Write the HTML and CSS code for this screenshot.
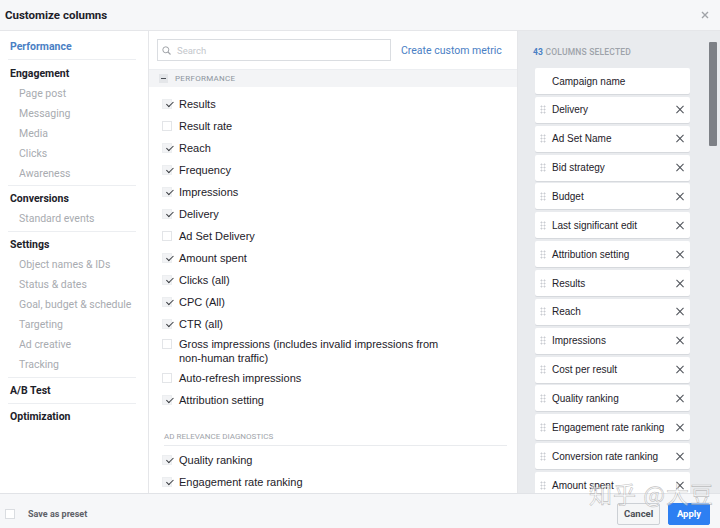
FILE: index.html
```html
<!DOCTYPE html>
<html>
<head>
<meta charset="utf-8">
<link rel="stylesheet" href="styles.css">
</head>
<body>
<div class="dialog">
  <div class="header">
    <span class="title">Customize columns</span>
    <svg class="close" width="8" height="8" viewBox="0 0 8 8"><path d="M1 1L7 7M7 1L1 7" stroke="#a0a3a8" stroke-width="1.4"/></svg>
  </div>
  <div class="body">
    <div class="sidebar">
      <div class="sec first"><div class="head active">Performance</div></div>
      <div class="sec eng"><div class="head">Engagement</div>
        <div class="sub">Page post</div><div class="sub">Messaging</div><div class="sub">Media</div><div class="sub">Clicks</div><div class="sub">Awareness</div></div>
      <div class="sec"><div class="head">Conversions</div><div class="sub">Standard events</div></div>
      <div class="sec"><div class="head">Settings</div>
        <div class="sub">Object names &amp; IDs</div><div class="sub">Status &amp; dates</div><div class="sub">Goal, budget &amp; schedule</div><div class="sub">Targeting</div><div class="sub">Ad creative</div><div class="sub">Tracking</div></div>
      <div class="sec"><div class="head">A/B Test</div></div>
      <div class="sec last"><div class="head">Optimization</div></div>
    </div>
    <div class="main">
      <div class="toolbar">
        <div class="search">
          <svg width="9" height="9" viewBox="0 0 9 9"><circle cx="3.8" cy="3.8" r="3" fill="none" stroke="#a0a3a8" stroke-width="1"/><path d="M6 6L8.5 8.5" stroke="#a0a3a8" stroke-width="1.1"/></svg>
          <span class="ph">Search</span>
        </div>
        <span class="link">Create custom metric</span>
      </div>
      <div class="group-head"><span class="minus"></span><span>PERFORMANCE</span></div>
      <div class="list">
        <div class="row"><span class="cb on"></span><span>Results</span></div>
        <div class="row"><span class="cb"></span><span>Result rate</span></div>
        <div class="row"><span class="cb on"></span><span>Reach</span></div>
        <div class="row"><span class="cb on"></span><span>Frequency</span></div>
        <div class="row"><span class="cb on"></span><span>Impressions</span></div>
        <div class="row"><span class="cb on"></span><span>Delivery</span></div>
        <div class="row"><span class="cb"></span><span>Ad Set Delivery</span></div>
        <div class="row"><span class="cb on"></span><span>Amount spent</span></div>
        <div class="row"><span class="cb on"></span><span>Clicks (all)</span></div>
        <div class="row"><span class="cb on"></span><span>CPC (All)</span></div>
        <div class="row"><span class="cb on"></span><span>CTR (all)</span></div>
        <div class="row multi"><span class="cb"></span><span class="wrap">Gross impressions (includes invalid impressions from non-human traffic)</span></div>
        <div class="row"><span class="cb"></span><span>Auto-refresh impressions</span></div>
        <div class="row"><span class="cb on"></span><span>Attribution setting</span></div>
        <div class="subhead">AD RELEVANCE DIAGNOSTICS</div>
        <div class="row"><span class="cb on"></span><span>Quality ranking</span></div>
        <div class="row"><span class="cb on"></span><span>Engagement rate ranking</span></div>
      </div>
    </div>
    <div class="selected">
      <div class="count"><span class="num">43</span> COLUMNS SELECTED</div>
      <div class="cards">
        <div class="card fixed"><span class="name">Campaign name</span></div>
        <div class="card"><span class="drag"></span><span class="name">Delivery</span><span class="x"></span></div>
        <div class="card"><span class="drag"></span><span class="name">Ad Set Name</span><span class="x"></span></div>
        <div class="card"><span class="drag"></span><span class="name">Bid strategy</span><span class="x"></span></div>
        <div class="card"><span class="drag"></span><span class="name">Budget</span><span class="x"></span></div>
        <div class="card"><span class="drag"></span><span class="name">Last significant edit</span><span class="x"></span></div>
        <div class="card"><span class="drag"></span><span class="name">Attribution setting</span><span class="x"></span></div>
        <div class="card"><span class="drag"></span><span class="name">Results</span><span class="x"></span></div>
        <div class="card"><span class="drag"></span><span class="name">Reach</span><span class="x"></span></div>
        <div class="card"><span class="drag"></span><span class="name">Impressions</span><span class="x"></span></div>
        <div class="card"><span class="drag"></span><span class="name">Cost per result</span><span class="x"></span></div>
        <div class="card"><span class="drag"></span><span class="name">Quality ranking</span><span class="x"></span></div>
        <div class="card"><span class="drag"></span><span class="name">Engagement rate ranking</span><span class="x"></span></div>
        <div class="card"><span class="drag"></span><span class="name">Conversion rate ranking</span><span class="x"></span></div>
        <div class="card"><span class="drag"></span><span class="name">Amount spent</span><span class="x"></span></div>
      </div>
      <div class="scrollbar"></div>
    </div>
  </div>
  <div class="footer">
    <span class="cb plain"></span>
    <span class="preset">Save as preset</span>
    <span class="spacer"></span>
    <span class="btn cancel">Cancel</span>
    <span class="btn apply">Apply</span>
  </div>
  <div class="watermark">知乎 @大豆</div>
</div>
</body>
</html>
```

FILE: styles.css
```css
* { box-sizing: border-box; }
html, body { margin: 0; padding: 0; }
body {
  width: 720px;
  height: 528px;
  overflow: hidden;
  background: #ffffff;
  font-family: Roboto, "Liberation Sans", Arial, sans-serif;
  color: #1d2129;
}
.dialog {
  position: relative;
  width: 720px;
  height: 528px;
  display: flex;
  flex-direction: column;
}
.header {
  height: 31px;
  flex: none;
  display: flex;
  align-items: center;
  justify-content: space-between;
  padding: 0 11px 0 5px;
  background: #f6f7f9;
  border-bottom: 1px solid #e5e6e9;
}
.title {
  font-size: 11.5px;
  font-weight: 700;
  color: #1d2129;
}
.close { display: block; }
.body {
  flex: none;
  height: 462px;
  display: flex;
  overflow: hidden;
}
/* sidebar */
.sidebar {
  width: 149px;
  flex: none;
  padding: 0 12px 0 8px;
  border-right: 1px solid #e5e6e9;
}
.sec {
  padding: 3px 0 2px;
  border-bottom: 1px solid #eceef1;
}
.sec.first { padding-top: 6px; }
.sec.eng { padding: 4px 0 1px; }
.sec.last { border-bottom: none; }
.head {
  height: 20px;
  line-height: 20px;
  padding-left: 2px;
  font-size: 10.5px;
  font-weight: 700;
  color: #1d2129;
}
.head.active { color: #4a80c4; }
.sub {
  height: 20px;
  line-height: 20px;
  padding-left: 11px;
  font-size: 10.5px;
  color: #a8abb0;
}
/* main */
.main {
  width: 369px;
  flex: none;
  border-right: 1px solid #e5e6e9;
  overflow: hidden;
}
.toolbar {
  height: 39px;
  display: flex;
  align-items: center;
  padding: 0 0 0 8px;
  border-bottom: 1px solid #eceef1;
}
.search {
  width: 234px;
  height: 22px;
  border: 1px solid #dadde1;
  display: flex;
  align-items: center;
  gap: 6px;
  padding-left: 4px;
}
.search svg { display: block; }
.ph {
  font-size: 9.5px;
  color: #c4c7cc;
}
.link {
  margin-left: 10px;
  font-size: 10.5px;
  color: #4a80c4;
}
.group-head {
  height: 17px;
  display: flex;
  align-items: center;
  gap: 7px;
  padding-left: 10px;
  background: #f3f4f6;
  font-size: 8px;
  color: #8d949e;
  letter-spacing: 0.3px;
}
.minus {
  width: 9px;
  height: 9px;
  background: #e4e6e9;
  position: relative;
}
.minus::after {
  content: "";
  position: absolute;
  left: 2px;
  top: 4px;
  width: 5px;
  height: 1.2px;
  background: #4b4f56;
}
.list {
  padding: 6px 0 0 13px;
  font-family: "Liberation Sans", Arial, sans-serif;
  font-size: 11px;
  color: #1d2129;
}
.row {
  display: flex;
  align-items: flex-start;
  gap: 7px;
  padding: 4px 0;
  line-height: 14px;
}
.row.multi { padding: 2px 0; }
.wrap { width: 270px; }
.cb {
  flex: none;
  width: 10px;
  height: 10px;
  margin-top: 2px;
  border: 1px solid #e3e5e8;
  background: #fff;
  position: relative;
}
.cb.on {
  border-color: #eceef0;
  background: #f2f3f5;
}
.cb.on::after {
  content: "";
  position: absolute;
  left: 1.5px;
  top: 0px;
  width: 6px;
  height: 3px;
  border-left: 1.3px solid #3a3d42;
  border-bottom: 1.3px solid #3a3d42;
  transform: rotate(-45deg) translate(0px, 2px);
}
.subhead {
  margin: 20px 10px 3px 2px;
  padding-bottom: 2px;
  line-height: 12px;
  font-family: Roboto, "Liberation Sans", sans-serif;
  font-size: 8px;
  color: #a0a4aa;
  border-bottom: 1px solid #e9ebee;
}
/* selected */
.selected {
  flex: 1;
  position: relative;
  background: #e9ebee;
  padding: 15px 0 0 15px;
  overflow: hidden;
}
.count {
  line-height: 12px;
  font-size: 8.5px;
  font-weight: 500;
  color: #9ea3aa;
  letter-spacing: 0.2px;
}
.count .num { color: #4a80c4; font-weight: 700; }
.cards {
  margin: 10px 0 0 2px;
  width: 155px;
  display: flex;
  flex-direction: column;
  gap: 2.86px;
}
.card {
  flex: none;
  height: 26px;
  background: #ffffff;
  border-radius: 2px;
  box-shadow: 0 1px 0 #d6d9dd;
  display: flex;
  align-items: center;
  padding: 0 6px 0 5px;
  font-family: "Liberation Sans", Arial, sans-serif;
  font-size: 10px;
  color: #1d2129;
}
.card.fixed { padding-left: 17px; }
.drag {
  width: 6px;
  height: 9px;
  margin-right: 6px;
  background-image: radial-gradient(circle, #c9ccd1 0.9px, transparent 1.1px);
  background-size: 3px 3px;
}
.name { flex: 1; }
.x {
  width: 8px;
  height: 8px;
  position: relative;
}
.x::before, .x::after {
  content: "";
  position: absolute;
  left: -1px;
  top: 3.5px;
  width: 10px;
  height: 1.1px;
  background: #4b4f56;
  transform: rotate(45deg);
}
.x::after { transform: rotate(-45deg); }
.scrollbar {
  position: absolute;
  left: 191px;
  top: 11px;
  width: 8px;
  height: 104px;
  background: #7d8086;
  border-radius: 1px;
}
/* footer */
.footer {
  flex: 1;
  display: flex;
  align-items: center;
  padding: 6px 10px 0 5px;
  background: #f6f7f9;
  border-top: 1px solid #e1e3e7;
}
.cb.plain { margin-top: 0; border-color: #dadde1; }
.preset {
  margin-left: 13px;
  font-size: 9px;
  font-weight: 700;
  color: #5e6168;
}
.spacer { flex: 1; }
.btn {
  height: 22px;
  line-height: 20px;
  padding: 0 6px;
  border: 1px solid #ccd0d5;
  border-radius: 2px;
  font-size: 9.5px;
  font-weight: 700;
  text-align: center;
}
.cancel {
  width: 43px;
  background: #f5f6f7;
  color: #4b4f56;
}
.apply {
  width: 42px;
  margin-left: 8px;
  background: #2d7ff2;
  border-color: #2d7ff2;
  color: #ffffff;
}
.watermark {
  position: absolute;
  left: 589px;
  top: 476px;
  font-family: "Noto Sans CJK SC", sans-serif;
  font-size: 23px;
  color: rgba(255, 255, 255, 0.55);
  -webkit-text-stroke: 0.6px rgba(140, 140, 140, 0.55);
  letter-spacing: 1px;
  pointer-events: none;
}
```
